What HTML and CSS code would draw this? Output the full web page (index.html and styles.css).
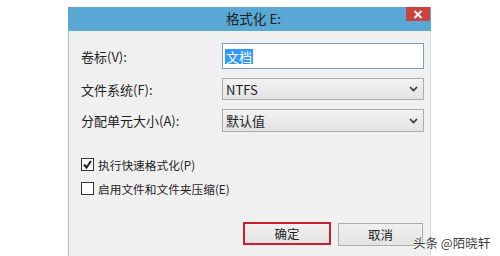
FILE: index.html
```html
<!DOCTYPE html>
<html lang="zh-CN">

<head>
    <meta charset="UTF-8" />
    <title>格式化 E:</title>
    <link rel="stylesheet" href="styles.css">
</head>

<body>
    <div class="dialog">
        <div class="titlebar">
            <span class="title">格式化 E:</span>
            <button class="close" aria-label="关闭">
                <svg width="10" height="9" viewBox="0 0 10 9">
                    <path d="M1.5 1 L8.5 8 M8.5 1 L1.5 8" stroke="#fff" stroke-width="1.8" fill="none" />
                </svg>
            </button>
        </div>

        <div class="content">
            <div class="fields">
                <label class="label">卷标(V):</label>
                <div class="input"><span class="selected">文档</span></div>

                <label class="label">文件系统(F):</label>
                <div class="select">
                    <span>NTFS</span>
                    <svg class="arrow" width="9" height="6" viewBox="0 0 9 6">
                        <path d="M1 1 L4.5 4.5 L8 1" stroke="#333" stroke-width="1.6" fill="none" />
                    </svg>
                </div>

                <label class="label">分配单元大小(A):</label>
                <div class="select tall">
                    <span>默认值</span>
                    <svg class="arrow" width="9" height="6" viewBox="0 0 9 6">
                        <path d="M1 1 L4.5 4.5 L8 1" stroke="#333" stroke-width="1.6" fill="none" />
                    </svg>
                </div>
            </div>

            <div class="options">
                <div class="option">
                    <span class="box">
                        <svg width="11" height="11" viewBox="0 0 11 11">
                            <path d="M2 5.5 L4.5 8.5 L9 2" stroke="#222" stroke-width="2" fill="none" />
                        </svg>
                    </span>
                    执行快速格式化(P)
                </div>
                <div class="option">
                    <span class="box"></span>
                    启用文件和文件夹压缩(E)
                </div>
            </div>

            <div class="buttons">
                <button class="btn ok">确定</button>
                <button class="btn cancel">取消</button>
            </div>
        </div>
    </div>

    <div class="watermark">头条 @陌晓轩</div>
</body>

</html>
```

FILE: styles.css
```css
body {
    margin: 0;
    background: #fff;
    font-family: "Noto Sans CJK SC", "Noto Sans", sans-serif;
    color: #1e1e1e;
    overflow: hidden;
    height: 256px;
    position: relative;
}

.dialog {
    margin: 7px 0 0 68px;
    width: 363px;
    height: 260px;
    background: #f0f0f0;
    box-sizing: border-box;
}

.titlebar {
    height: 24px;
    background: #5aa8d5;
    display: flex;
    justify-content: center;
    align-items: center;
    position: relative;
}

.title {
    font-size: 13.5px;
    color: #222;
    margin: -2px 0 0 8px;
}

.close {
    position: absolute;
    top: 0;
    right: 1px;
    width: 24px;
    height: 14px;
    border: none;
    padding: 0;
    background: #c9443e;
    display: flex;
    justify-content: center;
    align-items: center;
}

.content {
    height: 236px;
    border-left: 1px solid #a7bbcf;
    border-right: 1px solid #d3dbe3;
    padding: 12px 6px 0 12px;
    box-sizing: border-box;
}

.fields {
    display: grid;
    grid-template-columns: 141px 202px;
    row-gap: 9px;
    align-items: center;
}

.label {
    font-size: 13px;
}

.input {
    height: 26px;
    background: #fff;
    border: 1px solid #7f9db9;
    box-sizing: border-box;
    display: flex;
    align-items: center;
    padding-left: 2px;
}

.selected {
    background: #3399ff;
    color: #fff;
    font-size: 13px;
    line-height: 15px;
    padding: 0 1px;
}

.select {
    height: 22px;
    background: linear-gradient(#f2f2f2, #e3e3e3);
    border: 1px solid #acacac;
    box-sizing: border-box;
    display: flex;
    align-items: center;
    justify-content: space-between;
    padding: 0 5px 0 3px;
    font-size: 13px;
}

.select.tall {
    height: 23px;
}

.options {
    margin-top: 26px;
    display: flex;
    flex-direction: column;
    gap: 11px;
}

.option {
    display: flex;
    align-items: center;
    gap: 4px;
    font-size: 11.7px;
    height: 13px;
}

.box {
    width: 13px;
    height: 13px;
    box-sizing: border-box;
    border: 1px solid #333;
    background: #fff;
    display: flex;
    justify-content: center;
    align-items: center;
}

.buttons {
    margin-top: 27px;
    display: flex;
    justify-content: flex-end;
    gap: 7px;
    padding-right: 1px;
}

.btn {
    font-family: inherit;
    font-size: 12.5px;
    color: #222;
    background: linear-gradient(#f0f0f0, #e3e3e3);
    border: 1px solid #acacac;
    height: 23px;
    padding: 0;
}

.ok {
    width: 88px;
    border: 2px solid #c8202c;
}

.cancel {
    width: 85px;
    margin-top: 1px;
}

.watermark {
    position: absolute;
    left: 413px;
    top: 233px;
    font-size: 12.5px;
    color: #3a3a3a;
    text-shadow: 0 0 2px #fff, 0 0 2px #fff;
}
```
